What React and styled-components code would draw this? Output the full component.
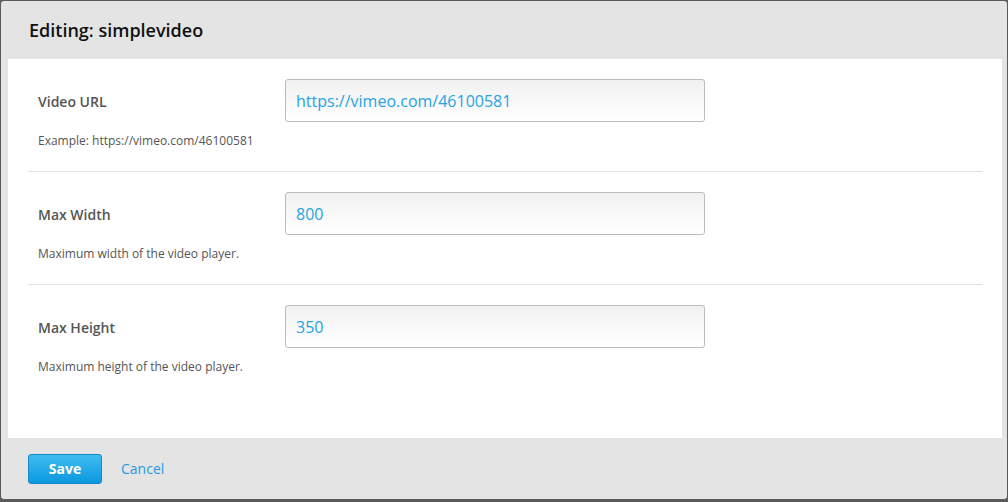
import React, { useState } from "react";
import styled, { createGlobalStyle } from "styled-components";

const GlobalStyle = createGlobalStyle`
  html, body {
    margin: 0;
    padding: 0;
    background: #5b5b5b;
    font-family: "Open Sans", "Liberation Sans", sans-serif;
  }
`;

const Page = styled.div`
  height: 502px;
  box-sizing: border-box;
  padding: 1px 1px 3px 1px;
`;

const Dialog = styled.div`
  display: flex;
  flex-direction: column;
  height: 100%;
  background: #e4e4e4;
  border-radius: 3px;
`;

const Header = styled.div`
  height: 58px;
  display: flex;
  align-items: center;
  padding-left: 28px;
  font-size: 18px;
  font-weight: 600;
  color: #111;
`;

const Body = styled.div`
  flex: 1;
  background: #fff;
  margin: 0 5px 0 7px;
  padding: 0 20px;
`;

const Row = styled.div`
  padding: 20px 10px 22px;
  border-bottom: ${(p) => (p.last ? "none" : "1px solid #e2e2e2")};
`;

const Field = styled.div`
  display: flex;
  align-items: center;
`;

const Label = styled.label`
  width: 247px;
  font-size: 14px;
  font-weight: 600;
  color: #555;
  padding-top: 2px;
`;

const Input = styled.input`
  width: 420px;
  height: 43px;
  box-sizing: border-box;
  padding: 0 10px;
  border: 1px solid #bcbcbc;
  border-radius: 3px;
  background: linear-gradient(to bottom, #f1f1f1, #ffffff);
  font-family: inherit;
  font-size: 16px;
  color: #27a3e2;
  outline: none;
`;

const Help = styled.div`
  margin-top: 10px;
  font-size: 12px;
  line-height: 17px;
  color: #555;
`;

const Footer = styled.div`
  height: 61px;
  display: flex;
  align-items: center;
  gap: 19px;
  padding-left: 27px;
`;

const SaveButton = styled.button`
  width: 74px;
  height: 30px;
  border: 1px solid #1389c9;
  border-radius: 3px;
  background: linear-gradient(to bottom, #40bdf1, #0a98df);
  color: #fff;
  font-family: inherit;
  font-weight: 700;
  font-size: 14px;
  cursor: pointer;
`;

const CancelLink = styled.a`
  font-size: 14px;
  color: #1e9be0;
  text-decoration: none;
  cursor: pointer;
`;

const fields = [
  { key: "url", label: "Video URL", value: "https://vimeo.com/46100581", help: "Example: https://vimeo.com/46100581" },
  { key: "width", label: "Max Width", value: "800", help: "Maximum width of the video player." },
  { key: "height", label: "Max Height", value: "350", help: "Maximum height of the video player." },
];

const App = () => {
  const [values, setValues] = useState(
    Object.fromEntries(fields.map((f) => [f.key, f.value]))
  );

  return (
    <Page>
      <GlobalStyle />
      <Dialog>
        <Header>Editing: simplevideo</Header>
        <Body>
          {fields.map((f, i) => (
            <Row key={f.key} last={i === fields.length - 1}>
              <Field>
                <Label>{f.label}</Label>
                <Input
                  value={values[f.key]}
                  onChange={(e) => setValues({ ...values, [f.key]: e.target.value })}
                />
              </Field>
              <Help>{f.help}</Help>
            </Row>
          ))}
        </Body>
        <Footer>
          <SaveButton>Save</SaveButton>
          <CancelLink>Cancel</CancelLink>
        </Footer>
      </Dialog>
    </Page>
  );
};

export default App;
